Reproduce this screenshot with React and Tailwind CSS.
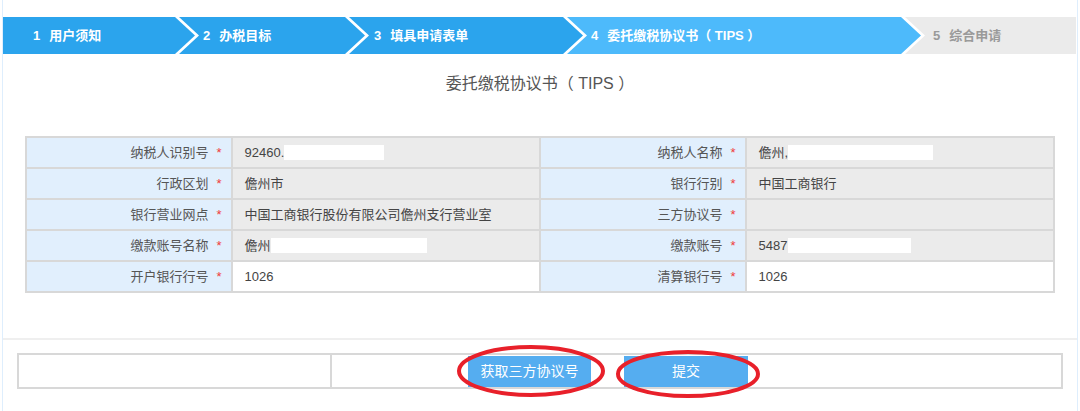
import React from 'react';

const steps = [
    { n: 1, label: '用户须知', w: 'w-[192px]', pl: 'pl-[30px]', shape: 'first', bg: 'bg-[#2ba4ed]', text: 'text-white' },
    { n: 2, label: '办税目标', w: 'w-[186px]', pl: 'pl-[24px]', shape: 'mid', bg: 'bg-[#2ba4ed]', text: 'text-white' },
    { n: 3, label: '填具申请表单', w: 'w-[234px]', pl: 'pl-[25px]', shape: 'mid', bg: 'bg-[#2ba4ed]', text: 'text-white' },
    { n: 4, label: '委托缴税协议书（ TIPS ）', w: 'w-[354px]', pl: 'pl-[24px]', shape: 'mid', bg: 'bg-[#4dbafb]', text: 'text-white' },
    { n: 5, label: '综合申请', w: 'w-[171px]', pl: 'pl-[28px]', shape: 'last', bg: 'bg-[#ebebeb]', text: 'text-[#9a9a9a]' },
];

const shapes = {
    first: '[clip-path:polygon(0_0,calc(100%_-_20px)_0,100%_50%,calc(100%_-_20px)_100%,0_100%)]',
    mid: '-ml-[16px] [clip-path:polygon(0_0,calc(100%_-_20px)_0,100%_50%,calc(100%_-_20px)_100%,0_100%,20px_50%)]',
    last: '-ml-[16px] [clip-path:polygon(0_0,100%_0,100%_100%,0_100%,20px_50%)]',
};

// [label, value, redaction width, white cell] per half-row
const rows = [
    [['纳税人识别号', '92460.', 'w-[100px]'], ['纳税人名称', '儋州,', 'w-[145px]']],
    [['行政区划', '儋州市'], ['银行行别', '中国工商银行']],
    [['银行营业网点', '中国工商银行股份有限公司儋州支行营业室'], ['三方协议号', '']],
    [['缴款账号名称', '儋州', 'w-[156px]'], ['缴款账号', '5487', 'w-[123px]']],
    [['开户银行行号', '1026', null, true], ['清算银行号', '1026', null, true]],
];

const Star = () => <span className="text-[#f03c3c] ml-[8px]">*</span>;

const Cells = ({ cell }) => {
    const [label, value, redact, white] = cell;
    return (
        <>
            <td className="w-[20%] bg-[#e1effd] border-2 border-[#d8d8d8] text-right pr-[9px] text-[#555]">
                {label}<Star />
            </td>
            <td className={`w-[30%] border-2 border-[#d8d8d8] pl-[12px] text-[#444] ${white ? 'bg-white' : 'bg-[#ebebeb]'}`}>
                <span className="inline-flex items-center">
                    {value}
                    {redact && <span className={`inline-block h-[15px] bg-white ${redact}`}></span>}
                </span>
            </td>
        </>
    );
};

export default function App() {
    return (
        <div className="relative w-[1080px] h-[411px] bg-white font-['Liberation_Sans','Noto_Sans_CJK_SC',sans-serif] overflow-hidden">
            <div className="mx-[2px] h-full border-x border-[#deeefd] pt-[17px]">
                {/* Step bar */}
                <div className="flex h-[37px]">
                    {steps.map(s => (
                        <div key={s.n} className={`${s.w} ${s.bg} ${s.pl} ${s.text} ${shapes[s.shape]} shrink-0 flex items-center gap-[9px] text-[13px] font-bold`}>
                            <span>{s.n}</span>
                            <span className="whitespace-pre">{s.label}</span>
                        </div>
                    ))}
                </div>

                <h1 className="mt-[18px] text-center text-[16px] leading-[24px] text-[#555] whitespace-pre">委托缴税协议书（ TIPS ）</h1>

                {/* Form table */}
                <table className="mt-[40px] mx-[22px] w-[1030px] border-collapse text-[13px] table-fixed">
                    <tbody>
                        {rows.map((r, i) => (
                            <tr key={i} className="h-[31px]">
                                <Cells cell={r[0]} />
                                <Cells cell={r[1]} />
                            </tr>
                        ))}
                    </tbody>
                </table>

                <div className="mt-[45px] border-t-2 border-[#efefef]"></div>

                {/* Actions */}
                <div className="mt-[13px] mx-[14px] flex h-[36px] border-2 border-[#d8d8d8]">
                    <div className="w-[313px] border-r-2 border-[#d8d8d8]"></div>
                    <div className="flex items-center pl-[136px] gap-[33px]">
                        <button className="w-[123px] h-[31px] bg-[#55adf0] text-white text-[14px]">获取三方协议号</button>
                        <button className="w-[124px] h-[31px] bg-[#55adf0] text-white text-[14px]">提交</button>
                    </div>
                </div>
            </div>

            {/* Red annotation marks */}
            <svg className="absolute inset-0 pointer-events-none" width="1080" height="411">
                <ellipse cx="531" cy="371" rx="72" ry="24" fill="none" stroke="#e8202a" strokeWidth="4" />
                <ellipse cx="688" cy="374" rx="70" ry="22" fill="none" stroke="#e8202a" strokeWidth="4" />
            </svg>
        </div>
    );
}
